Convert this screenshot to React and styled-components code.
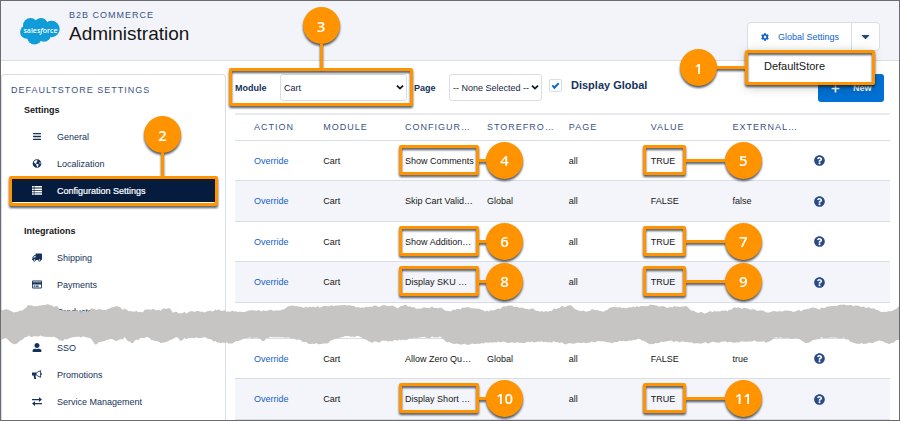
import React from "react";
import styled, { createGlobalStyle, css } from "styled-components";
import {
  FaBars,
  FaGlobeAmericas,
  FaTruck,
  FaRegCreditCard,
  FaUserAlt,
  FaCog,
  FaPlus,
  FaQuestionCircle,
  FaCaretDown,
} from "react-icons/fa";

const orange = "#ff9300";
const navy = "#16325c";
const line = "#d8dde6";

const GlobalStyle = createGlobalStyle`
  *, *::before, *::after { box-sizing: border-box; }
  body {
    margin: 0;
    background: #fff;
    color: #222;
    font-family: "Liberation Sans", Arial, sans-serif;
    font-size: 9px;
    line-height: 12px;
  }
  button, select, input { font: inherit; color: inherit; }
`;

const Page = styled.div`
  min-height: 100vh;
  display: flex;
  flex-direction: column;
  border: 1px solid #6b6b70;
  overflow: hidden;
`;

const capsText = css`
  color: #3a5384;
  font-size: 9px;
  font-weight: 400;
  letter-spacing: 1px;
`;

/* ---------- header ---------- */

const Header = styled.header`
  display: flex;
  align-items: flex-start;
  height: 60px;
  padding: 8px 19px 0 18px;
  background: #f3f4f9;
  border-bottom: 1px solid ${line};
`;

const Logo = styled.svg`
  flex: none;
  width: 42px;
  height: 30px;
  margin-top: 7px;
`;

const Titles = styled.div`
  flex: 1;
  margin-left: 8px;
`;

const Eyebrow = styled.div`
  ${capsText}
  line-height: 13px;
`;

const Title = styled.h1`
  margin: 0;
  color: #161616;
  font-size: 19px;
  font-weight: 400;
  line-height: 24px;
`;

const Actions = styled.div`
  position: relative;
  z-index: 2;
  display: flex;
  width: 133px;
  height: 29px;
  margin-top: 13px;
  background: #fff;
  border: 1px solid ${line};
  border-radius: 4px;
`;

const GlobalButton = styled.button`
  flex: 1;
  display: flex;
  align-items: center;
  gap: 9px;
  padding: 0 0 0 13px;
  border: 0;
  border-right: 1px solid ${line};
  background: none;
  color: #1163cb;
  white-space: nowrap;
`;

const CaretButton = styled.button`
  display: grid;
  place-items: center;
  width: 27px;
  padding: 0;
  border: 0;
  background: none;
  color: #27457a;
  font-size: 13px;
`;

const Menu = styled.div`
  position: absolute;
  top: 27px;
  left: -1px;
  right: 7px;
  height: 35px;
  background: #fff;
  box-shadow: 0 2px 10px rgba(0, 0, 0, 0.25);
`;

const MenuItem = styled.button`
  width: 100%;
  height: 100%;
  padding: 0 0 3px 17px;
  border: 0;
  background: none;
  color: #161616;
  font-size: 11px;
  text-align: left;
`;

/* ---------- numbered callouts ---------- */

const CalloutWrap = styled.div`
  position: absolute;
  z-index: 1;
  display: flex;
  align-items: center;
  pointer-events: none;
  filter: drop-shadow(0 2px 1px rgba(20, 30, 40, 0.75));
`;

const CellCallout = styled(CalloutWrap)`
  top: 4px;
  left: ${(p) => p.$left}px;
  height: 30px;
`;

const MenuCallout = styled(CalloutWrap)`
  top: 0;
  right: -3px;
  height: 35px;
`;

const ModuleCallout = styled(CalloutWrap)`
  flex-direction: column;
  left: -6px;
  right: -6px;
  bottom: -5px;
`;

const NavCallout = styled(CalloutWrap)`
  left: 7px;
  right: 7px;
  bottom: -2px;
`;

const Frame = styled.div`
  width: ${(p) => p.$width};
  height: ${(p) => p.$height};
  flex: none;
  border: 3px solid ${orange};
  border-radius: 2px;
`;

const Stem = styled.div`
  flex: none;
  width: ${(p) => p.$width}px;
  height: ${(p) => p.$height}px;
  background: ${orange};
`;

const Badge = styled.div`
  display: grid;
  place-items: center;
  flex: none;
  width: 37px;
  height: 37px;
  border-radius: 50%;
  background: ${orange};
  color: #fff;
  font: 600 15px/20px "Open Sans", "Noto Sans", sans-serif;
`;

const NavBadge = styled.div`
  position: absolute;
  bottom: 29px;
  left: 135px;
  display: flex;
  flex-direction: column;
  align-items: center;
`;

/* ---------- body ---------- */

const Body = styled.div`
  position: relative;
  flex: 1;
  display: flex;
  gap: 9px;
  padding: 13px 9px 0 0;
`;

const Sidebar = styled.aside`
  flex: none;
  width: 225px;
  border: 1px solid ${line};
  border-bottom: 0;
  border-radius: 4px 4px 0 0;
`;

const SidebarTitle = styled.h2`
  ${capsText}
  margin: 0;
  padding: 8px 0 0 9px;
  line-height: 14px;
`;

const GroupTitle = styled.h3`
  margin: ${(p) => p.$gap}px 0 0;
  padding-left: 22px;
  color: #161616;
  font-size: 9px;
  font-weight: 700;
  line-height: 26px;
`;

const NavList = styled.ul`
  margin: ${(p) => p.$gap || 0}px 0 0;
  padding: 0;
  list-style: none;
`;

const NavEntry = styled.li`
  position: relative;
  height: 27px;
  padding: ${(p) => (p.$current ? "2px 10px" : "0 10px")};
`;

const NavLink = styled.a`
  display: flex;
  align-items: center;
  gap: 15px;
  height: 100%;
  padding-left: 20px;
  background: ${(p) => (p.$current ? "#061c3f" : "none")};
  color: ${(p) => (p.$current ? "#fff" : navy)};
  text-decoration: none;
  -webkit-text-stroke: ${(p) => (p.$current ? "0.2px #fff" : "0")};

  svg { width: 10px; height: 9px; flex: none; }
`;

const Main = styled.main`
  flex: 1;
  min-width: 0;
`;

const Toolbar = styled.div`
  display: flex;
  align-items: flex-start;
  height: 28px;
  margin-bottom: 11px;
  color: ${navy};
`;

const Field = styled.div`
  position: relative;
  display: flex;
  align-items: center;
  height: 27px;
  margin-right: 7px;
`;

const FieldLabel = styled.label`
  width: ${(p) => p.$width}px;
  font-weight: 700;
`;

const SelectBox = styled.div`
  position: relative;
  width: ${(p) => p.$width}px;

  svg {
    position: absolute;
    right: 3px;
    top: 10px;
    width: 8px;
    height: 7px;
    pointer-events: none;
  }
`;

const Select = styled.select`
  appearance: none;
  display: block;
  width: 100%;
  height: 27px;
  padding: 0 0 0 3px;
  border: 1px solid ${line};
  border-radius: 3px;
  background: #fff;
  color: #16253f;
`;

const Check = styled.input`
  appearance: none;
  width: 13px;
  height: 13px;
  margin: 5px 9px 0 0;
  border: 1px solid ${line};
  border-radius: 2px;
  display: grid;
  place-items: center;

  &:checked::before {
    content: "";
    width: 7px;
    height: 4px;
    margin-bottom: 2px;
    border: solid #0070d2;
    border-width: 0 0 2px 2px;
    transform: rotate(-45deg);
  }
`;

const CheckLabel = styled.label`
  font-size: 11px;
  font-weight: 700;
  line-height: 22px;
`;

const NewButton = styled.button`
  display: flex;
  align-items: center;
  gap: 13px;
  height: 28px;
  width: 66px;
  margin: 0 6px 0 auto;
  padding: 0 0 0 13px;
  border: 0;
  border-radius: 3px;
  background: #0070d2;
  color: #fff;
  font-weight: 700;

  svg { width: 9px; height: 9px; }
`;

const Table = styled.table`
  width: 100%;
  table-layout: fixed;
  border-collapse: separate;
  border-spacing: 0;
  border-top: 2px solid #e9eaef;
`;

const Col = styled.col`
  width: ${(p) => p.$width};
`;

const HeadCell = styled.th`
  ${capsText}
  height: 26px;
  padding: 0 0 2px 8px;
  border-bottom: 1px solid ${line};
  text-align: left;
  white-space: nowrap;

  &:first-child { padding-left: 19px; }
`;

const Row = styled.tr`
  height: ${(p) => (p.$shaded ? 41 : 40)}px;
  background: ${(p) => (p.$shaded ? "#f4f5fa" : "#fff")};
`;

const Cell = styled.td`
  position: relative;
  padding: 0 0 0 8px;
  border-bottom: 1px solid ${line};
  color: #161616;
  white-space: nowrap;

  &:first-child { padding-left: 19px; }

  > svg { display: block; width: 11px; height: 11px; color: #2a4a86; }
`;

const GapCell = styled.td`
  height: 36px;
  padding: 0;
  border-bottom: 1px solid ${line};
`;

const RowLink = styled.a`
  color: #1163cb;
  text-decoration: none;
`;

const Tear = styled.svg`
  position: absolute;
  z-index: 2;
  top: 243px;
  left: 0;
  width: 100%;
  height: 42px;
  pointer-events: none;
`;

/* ---------- drawings ---------- */

const Cloud = () => (
  <Logo viewBox="0 0 42 30" role="img" aria-label="salesforce">
    <g fill="#109cd8">
      <circle cx="11.5" cy="9.5" r="7.5" />
      <circle cx="22" cy="8.5" r="6.6" />
      <circle cx="32.5" cy="13" r="8.2" />
      <circle cx="7.8" cy="16" r="6.7" />
      <circle cx="15.5" cy="21" r="7.4" />
      <circle cx="25" cy="19" r="6.8" />
      <path d="M8 8h24v12H8z" />
    </g>
    <text
      x="21.5"
      y="16.5"
      textAnchor="middle"
      fill="#fff"
      fontFamily="Open Sans, sans-serif"
      fontSize="7"
      fontWeight="600"
    >
      sales<tspan fontStyle="italic">f</tspan>orce
    </text>
  </Logo>
);

const ListIcon = () => (
  <svg viewBox="0 0 10 9" fill="currentColor">
    {[0, 2.4, 4.8, 7.2].map((y) => (
      <path key={y} d={`M0 ${y}h1.8v1.6H0zM2.4 ${y}H10v1.6H2.4z`} />
    ))}
  </svg>
);

const SwapIcon = () => (
  <svg viewBox="0 0 10 9" fill="currentColor">
    <path d="M0 2h7V.2L10 2.6 7 5V3.2H0zM10 7.2H3V9L0 6.6 3 4.2V6h7z" />
  </svg>
);

const HornIcon = () => (
  <svg viewBox="0 0 10 9" fill="currentColor">
    <path d="M0 2.4h4.6v3.2H3.4L4.2 9H2.3L1.6 5.6H0z" />
    <path
      d="M4.6 2.6L8.6.7v6.6L4.6 5.4M9.4 3.2v1.6"
      fill="none"
      stroke="currentColor"
      strokeWidth="0.9"
    />
  </svg>
);

const MirrorIcon = styled.span`
  display: flex;
  transform: scaleX(-1);
`;

const Chevron = () => (
  <svg viewBox="0 0 8 7" fill="none" stroke="#101828" strokeWidth="1.8">
    <path d="M1 1.6l3 3 3-3" />
  </svg>
);

const tornTop = [
  0, 310, 7, 310, 15, 312, 22, 310, 27, 306, 48, 305, 57, 307, 59, 311, 70, 311,
  78, 312, 88, 312, 90, 308, 100, 310, 107, 309, 116, 306, 122, 309, 130, 311,
  142, 312, 146, 309, 160, 310, 168, 308, 172, 312, 186, 313, 190, 311, 206,
  312, 215, 310, 228, 311, 245, 312, 250, 310, 265, 311, 282, 310, 287, 307,
  293, 305, 300, 307, 315, 307, 335, 305, 350, 305, 360, 308, 370, 306, 392,
  306, 398, 308, 404, 305, 420, 309, 428, 307, 440, 308, 448, 311, 455, 310,
  468, 307, 478, 309, 485, 311, 495, 310, 510, 305, 520, 308, 533, 309, 540,
  312, 550, 311, 558, 308, 562, 306, 572, 306, 578, 311, 588, 311, 594, 309,
  604, 312, 612, 307, 622, 308, 645, 306, 655, 305, 665, 307, 688, 307, 692,
  311, 705, 313, 715, 311, 728, 311, 735, 308, 745, 308, 755, 310, 770, 312,
  800, 311, 812, 308, 820, 309, 830, 306, 845, 305, 860, 306, 875, 309, 886,
  312, 893, 311, 900, 306,
];

const tornBottom = [
  0, 341, 5, 338, 9, 342, 15, 344, 22, 339, 28, 336, 55, 337, 60, 341, 70, 338,
  80, 337, 90, 338, 94, 344, 102, 342, 108, 339, 116, 341, 124, 338, 131, 343,
  136, 340, 145, 337, 158, 342, 165, 342, 175, 337, 180, 340, 188, 338, 205,
  337, 213, 341, 222, 343, 232, 343, 240, 340, 255, 337, 262, 341, 270, 337,
  292, 338, 302, 341, 310, 344, 328, 343, 335, 338, 345, 336, 360, 337, 372,
  342, 390, 341, 405, 340, 412, 338, 440, 337, 447, 342, 455, 344, 478, 344,
  487, 343, 500, 342, 510, 342, 520, 343, 540, 342, 560, 342, 568, 344, 582,
  343, 600, 341, 612, 343, 630, 340, 640, 339, 650, 344, 668, 341, 700, 343,
  722, 342, 740, 342, 755, 341, 768, 342, 775, 338, 795, 338, 808, 343, 822,
  338, 845, 338, 855, 343, 866, 344, 880, 341, 890, 344, 900, 340,
];

const roughen = (flat) => {
  const out = [];
  for (let i = 0; i < flat.length - 2; i += 2) {
    const [x0, y0, x1, y1] = flat.slice(i, i + 4);
    const steps = Math.max(1, Math.round((x1 - x0) / 2));
    for (let s = 0; s < steps; s += 1) {
      const x = x0 + ((x1 - x0) * s) / steps;
      const noise = Math.sin(x * 12.9898) * 43758.5453;
      const jitter = (noise - Math.floor(noise) - 0.5) * 1.8;
      out.push([x, y0 + ((y1 - y0) * s) / steps + jitter - 304]);
    }
  }
  out.push([900, flat[flat.length - 1] - 304]);
  return out;
};

const tearPoints = [...roughen(tornTop), ...roughen(tornBottom).reverse()]
  .map(([x, y]) => `${x.toFixed(1)},${y.toFixed(1)}`)
  .join(" ");

/* ---------- data ---------- */

const navGroups = [
  {
    title: "Settings",
    gap: 0,
    items: [
      { label: "General", icon: <FaBars /> },
      { label: "Localization", icon: <FaGlobeAmericas /> },
      { label: "Configuration Settings", icon: <ListIcon />, current: true },
    ],
  },
  {
    title: "Integrations",
    gap: 14,
    items: [
      { label: "Shipping", icon: <MirrorIcon><FaTruck /></MirrorIcon> },
      { label: "Payments", icon: <FaRegCreditCard /> },
      { label: "Products", icon: <FaBars /> },
    ],
  },
  {
    gap: 9,
    items: [
      { label: "SSO", icon: <FaUserAlt /> },
      { label: "Promotions", icon: <HornIcon /> },
      { label: "Service Management", icon: <SwapIcon /> },
    ],
  },
];

const columns = [
  ["ACTION", "12.25%"],
  ["MODULE", "12.5%"],
  ["CONFIGUR…", "12.5%"],
  ["STOREFRO…", "12.5%"],
  ["PAGE", "12.5%"],
  ["VALUE", "12.5%"],
  ["EXTERNAL…", "12.5%"],
  ["", "auto"],
];

const rowsAbove = [
  { name: "Show Comments", value: "TRUE", marks: [4, 5] },
  { name: "Skip Cart Valid…", store: "Global", value: "FALSE", external: "false" },
  { name: "Show Addition…", value: "TRUE", marks: [6, 7] },
  { name: "Display SKU …", value: "TRUE", marks: [8, 9] },
];

const rowsBelow = [
  { name: "Allow Zero Qu…", store: "Global", value: "FALSE", external: "true" },
  { name: "Display Short …", value: "TRUE", marks: [10, 11] },
];

const CellMark = ({ left, width, stem, n }) => (
  <CellCallout $left={left}>
    <Frame $width={`${width}px`} $height="30px" />
    <Stem $width={stem} $height={3} />
    <Badge>{n}</Badge>
  </CellCallout>
);

const SettingRow = ({ row, shaded }) => (
  <Row $shaded={shaded}>
    <Cell><RowLink href="#override">Override</RowLink></Cell>
    <Cell>Cart</Cell>
    <Cell>
      {row.name}
      {row.marks && <CellMark left={2} width={80} stem={7} n={row.marks[0]} />}
    </Cell>
    <Cell>{row.store}</Cell>
    <Cell>all</Cell>
    <Cell>
      {row.value}
      {row.marks && <CellMark left={0} width={43} stem={39} n={row.marks[1]} />}
    </Cell>
    <Cell>{row.external}</Cell>
    <Cell><FaQuestionCircle /></Cell>
  </Row>
);

export default function App() {
  return (
    <>
      <GlobalStyle />
      <Page>
        <Header>
          <Cloud />
          <Titles>
            <Eyebrow>B2B COMMERCE</Eyebrow>
            <Title>Administration</Title>
          </Titles>
          <Actions>
            <GlobalButton type="button"><FaCog size={8} />Global Settings</GlobalButton>
            <CaretButton type="button" aria-label="Choose store"><FaCaretDown /></CaretButton>
            <Menu>
              <MenuItem type="button">DefaultStore</MenuItem>
              <MenuCallout>
                <Badge>1</Badge>
                <Stem $width={28} $height={3} />
                <Frame $width="130px" $height="35px" />
              </MenuCallout>
            </Menu>
          </Actions>
        </Header>

        <Body>
          <Sidebar>
            <SidebarTitle>DEFAULTSTORE SETTINGS</SidebarTitle>
            <nav>
              {navGroups.map((group, i) => (
                <React.Fragment key={i}>
                  {group.title && <GroupTitle $gap={group.gap}>{group.title}</GroupTitle>}
                  <NavList $gap={group.title ? 0 : group.gap}>
                    {group.items.map((item) => (
                      <NavEntry key={item.label} $current={item.current}>
                        <NavLink href="#settings" $current={item.current}>
                          {item.icon}
                          {item.label}
                        </NavLink>
                        {item.current && (
                          <NavCallout>
                            <Frame $width="100%" $height="30px" />
                            <NavBadge>
                              <Badge>2</Badge>
                              <Stem $width={3} $height={24} />
                            </NavBadge>
                          </NavCallout>
                        )}
                      </NavEntry>
                    ))}
                  </NavList>
                </React.Fragment>
              ))}
            </nav>
          </Sidebar>

          <Main>
            <Toolbar>
              <Field>
                <FieldLabel htmlFor="module" $width={45}>Module</FieldLabel>
                <SelectBox $width={127}>
                  <Select id="module"><option>Cart</option></Select>
                  <Chevron />
                </SelectBox>
                <ModuleCallout>
                  <Badge>3</Badge>
                  <Stem $width={3} $height={24} />
                  <Frame $width="100%" $height="38px" />
                </ModuleCallout>
              </Field>
              <Field>
                <FieldLabel htmlFor="page" $width={35}>Page</FieldLabel>
                <SelectBox $width={93}>
                  <Select id="page"><option>-- None Selected --</option></Select>
                  <Chevron />
                </SelectBox>
              </Field>
              <Check id="display-global" type="checkbox" defaultChecked />
              <CheckLabel htmlFor="display-global">Display Global</CheckLabel>
              <NewButton type="button"><FaPlus />New</NewButton>
            </Toolbar>

            <Table>
              <colgroup>
                {columns.map(([label, width]) => <Col key={label} $width={width} />)}
              </colgroup>
              <thead>
                <tr>
                  {columns.map(([label]) => <HeadCell key={label} scope="col">{label}</HeadCell>)}
                </tr>
              </thead>
              <tbody>
                {rowsAbove.map((row, i) => (
                  <SettingRow key={row.name} row={row} shaded={i % 2 === 1} />
                ))}
                <tr><GapCell colSpan={8} /></tr>
                {rowsBelow.map((row, i) => (
                  <SettingRow key={row.name} row={row} shaded={i % 2 === 1} />
                ))}
              </tbody>
            </Table>
          </Main>

          <Tear viewBox="0 0 900 42" preserveAspectRatio="none" aria-hidden="true">
            <polygon points={tearPoints} fill="#c6c5c3" />
          </Tear>
        </Body>
      </Page>
    </>
  );
}
